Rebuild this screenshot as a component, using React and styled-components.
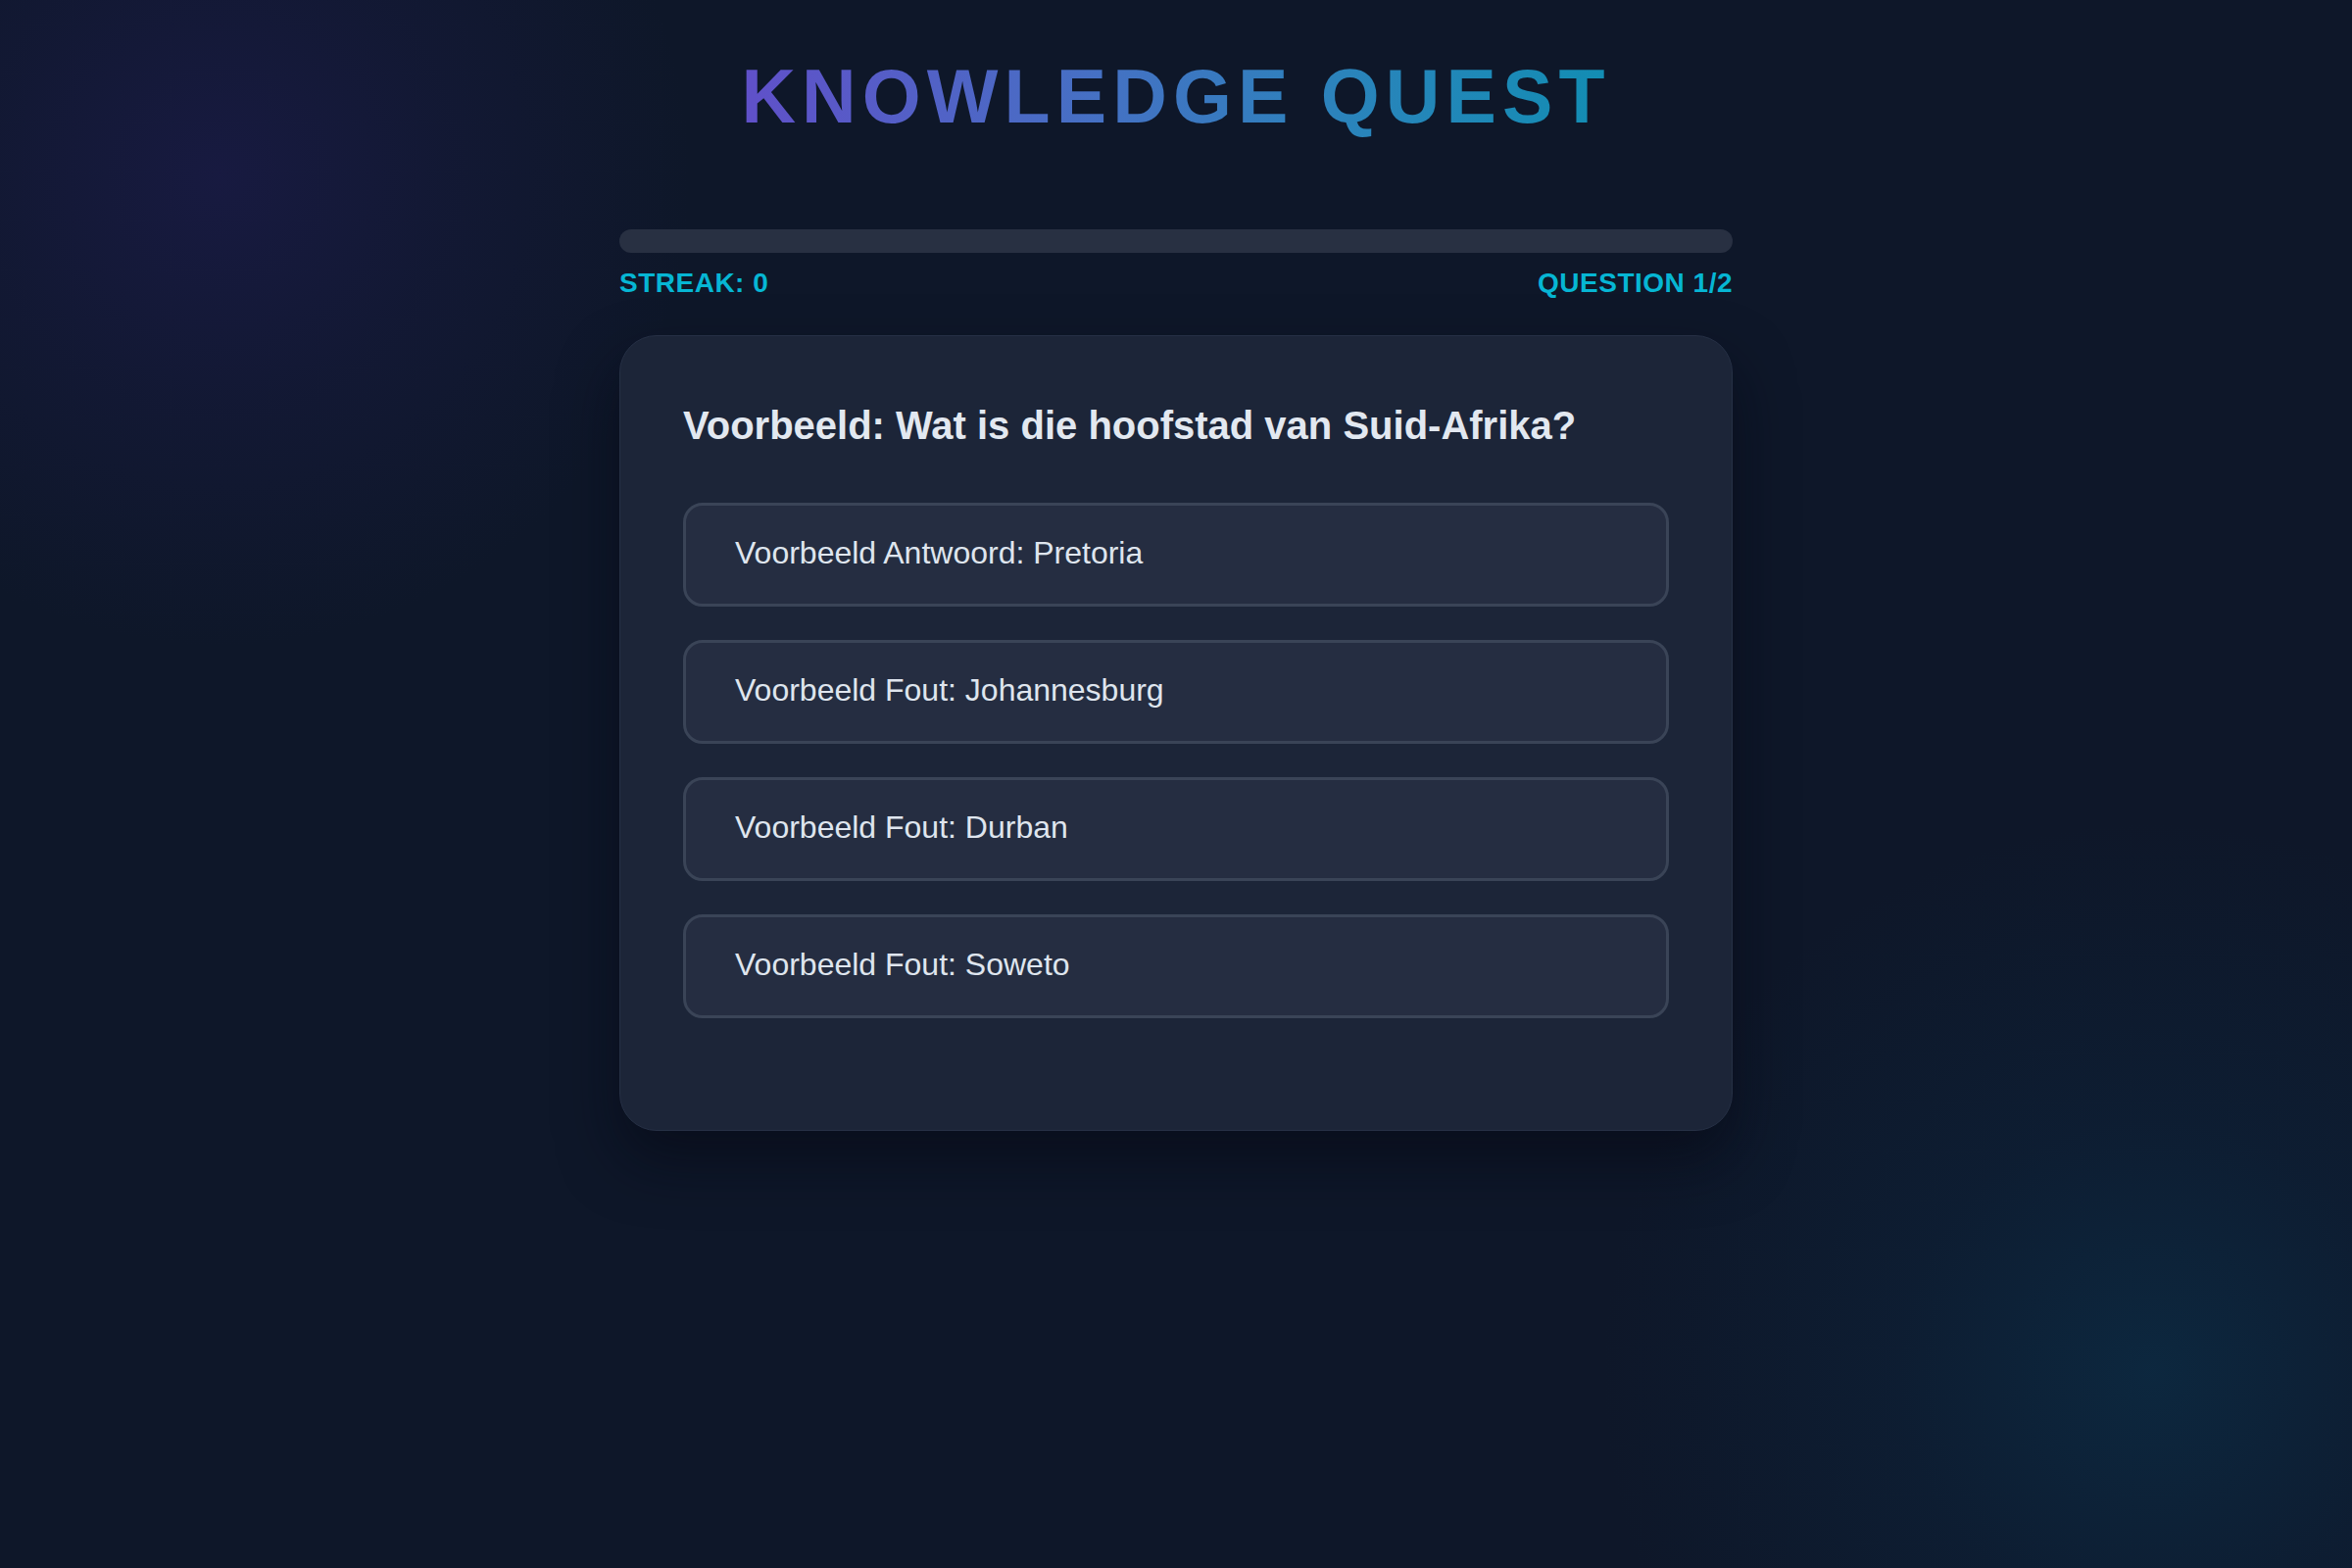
import React from "react";
import styled, { createGlobalStyle } from "styled-components";

const GlobalStyle = createGlobalStyle`
  * { box-sizing: border-box; }
  html, body { margin: 0; padding: 0; }
  body {
    min-height: 1600px;
    background-color: #0e1729;
    background-image:
      radial-gradient(circle at 225px 180px, rgba(30, 28, 80, 0.6) 0px, rgba(30, 28, 80, 0.28) 230px, rgba(14, 23, 41, 0) 480px),
      radial-gradient(circle at 2195px 1400px, rgba(12, 45, 70, 0.75) 0px, rgba(12, 40, 66, 0.35) 260px, rgba(14, 23, 41, 0) 560px);
    background-repeat: no-repeat;
    font-family: "Liberation Sans", Arial, sans-serif;
    color: #e2e8f0;
  }
`;

const Page = styled.main`
  width: 100%;
  min-height: 1600px;
  display: flex;
  flex-direction: column;
  align-items: center;
  padding-top: 52px;
`;

const Title = styled.h1`
  margin: 0;
  font-family: "Liberation Sans", Arial, sans-serif;
  font-weight: 700;
  font-size: 77px;
  line-height: 92px;
  letter-spacing: 6.1px;
  background: linear-gradient(90deg, #6050c9 0%, #4670c4 40%, #2a84bb 70%, #128db3 100%);
  -webkit-background-clip: text;
  background-clip: text;
  color: transparent;
`;

const Quiz = styled.section`
  width: 1136px;
  margin-top: 90px;
  display: flex;
  flex-direction: column;
`;

const ProgressTrack = styled.div`
  height: 24px;
  border-radius: 12px;
  background: #283042;
  overflow: hidden;
`;

const ProgressFill = styled.div`
  height: 100%;
  background: linear-gradient(90deg, #6366f1, #06b6d4);
`;

const Stats = styled.div`
  display: flex;
  justify-content: space-between;
  margin-top: 14px;
  margin-bottom: 36px;
`;

const Stat = styled.span`
  font-size: 28px;
  line-height: 34px;
  font-weight: 700;
  letter-spacing: 0.5px;
  color: #06b6d4;
`;

const Card = styled.div`
  background: #1c2538;
  border: 1px solid #263045;
  border-radius: 38px;
  padding: 63px 64px 114px;
  box-shadow: 0 30px 60px rgba(5, 8, 18, 0.55);
  display: flex;
  flex-direction: column;
`;

const Question = styled.h2`
  margin: 0 0 51px;
  font-size: 40px;
  line-height: 56px;
  font-weight: 700;
  color: #e2e8f0;
`;

const Answers = styled.div`
  display: flex;
  flex-direction: column;
  gap: 34px;
`;

const AnswerButton = styled.button`
  display: block;
  width: 100%;
  text-align: left;
  font-family: "Liberation Sans", Arial, sans-serif;
  font-size: 32px;
  line-height: 36px;
  color: #dfe5ee;
  background: #252d41;
  border: 3px solid #3a4457;
  border-radius: 20px;
  padding: 30px 48px 34px 50px;
  cursor: pointer;
`;

const answers = [
  "Voorbeeld Antwoord: Pretoria",
  "Voorbeeld Fout: Johannesburg",
  "Voorbeeld Fout: Durban",
  "Voorbeeld Fout: Soweto",
];

export default function App() {
  const progress = 0;
  return (
    <>
      <GlobalStyle />
      <Page>
        <Title>KNOWLEDGE QUEST</Title>
        <Quiz>
          <ProgressTrack>
            <ProgressFill style={{ width: `${progress}%` }} />
          </ProgressTrack>
          <Stats>
            <Stat>STREAK: 0</Stat>
            <Stat>QUESTION 1/2</Stat>
          </Stats>
          <Card>
            <Question>Voorbeeld: Wat is die hoofstad van Suid-Afrika?</Question>
            <Answers>
              {answers.map((a) => (
                <AnswerButton key={a}>{a}</AnswerButton>
              ))}
            </Answers>
          </Card>
        </Quiz>
      </Page>
    </>
  );
}
